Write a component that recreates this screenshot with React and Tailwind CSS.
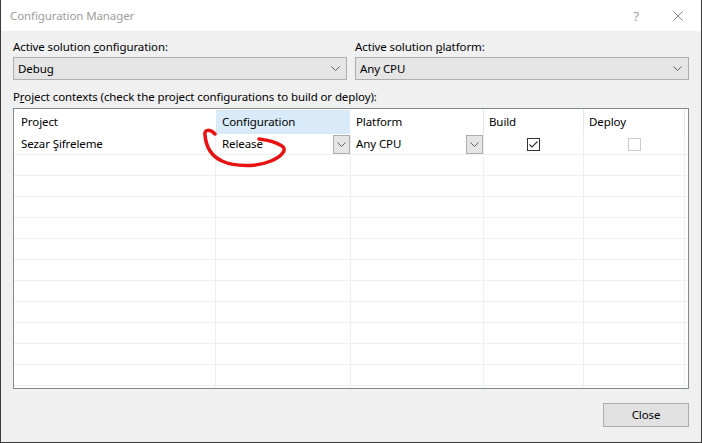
import React from "react";

const Chevron = ({ className = "" }) => (
  <svg width="9" height="5" viewBox="0 0 9 5" className={className}>
    <path d="M0.5 0.5 L4.5 4.5 L8.5 0.5" fill="none" stroke="#606060" strokeWidth="1" />
  </svg>
);

const Select = ({ value }) => (
  <div className="flex h-[23px] w-[334px] items-center justify-between border border-[#adadad] bg-[#e5e5e5] pl-[4px] pr-[6px]">
    <span>{value}</span>
    <Chevron />
  </div>
);

const CellButton = () => (
  <div className="mt-[1px] flex h-[19px] w-[17px] items-center justify-center border border-[#adadad] bg-[#e5e5e5]">
    <Chevron />
  </div>
);

const Sep = () => <div className="w-[1px] bg-[#eceff3]" />;

const EmptyCells = () => (
  <>
    <div className="w-[201px]" />
    <Sep />
    <div className="w-[134px]" />
    <Sep />
    <div className="w-[132px]" />
    <Sep />
    <div className="w-[99px]" />
    <Sep />
    <div className="w-[100px]" />
    <Sep />
    <div className="w-[3px]" />
  </>
);

export default function App() {
  const emptyRows = Array.from({ length: 11 });
  return (
    <div className="relative flex h-[443px] w-[702px] flex-col border-x border-b border-[#3c3c3c] bg-[#f0f0f0] font-['Segoe_UI','Noto_Sans',sans-serif] text-[11.5px] leading-[16px] tracking-[-0.1px] text-black">
      {/* Title bar */}
      <div className="flex h-[31px] shrink-0 items-center justify-between bg-white pl-[9px]">
        <span className="text-[#9d9d9d]">Configuration Manager</span>
        <div className="flex h-full items-center">
          <span className="mr-[34px] text-[13px] text-[#9d9d9d]">?</span>
          <div className="mr-[18px] flex h-[10px] w-[10px] items-center justify-center">
            <svg width="10" height="10" viewBox="0 0 10 10">
              <path d="M0.5 0.5 L9.5 9.5 M9.5 0.5 L0.5 9.5" stroke="#8a8a8a" strokeWidth="1" fill="none" />
            </svg>
          </div>
        </div>
      </div>

      {/* Body */}
      <div className="flex flex-1 flex-col px-[12px] pt-[8px]">
        <div className="flex gap-[8px]">
          <div className="flex flex-col gap-[2px]">
            <span>
              Active solution <span className="underline">c</span>onfiguration:
            </span>
            <Select value="Debug" />
          </div>
          <div className="flex flex-col gap-[2px]">
            <span>
              Active solution <span className="underline">p</span>latform:
            </span>
            <Select value="Any CPU" />
          </div>
        </div>

        <span className="mt-[9px]">
          P<span className="underline">r</span>oject contexts (check the project configurations to build or deploy):
        </span>

        {/* Table */}
        <div className="mt-[3px] flex h-[281px] flex-col border border-[#828790] bg-white">
          {/* Header */}
          <div className="flex h-[25px] shrink-0">
            <div className="flex w-[201px] items-center pl-[7px]">Project</div>
            <div className="w-[1px]" />
            <div className="mt-[1px] flex w-[134px] items-center bg-[#d9ebf9] pl-[6px]">Configuration</div>
            <div className="w-[1px]" />
            <div className="flex w-[132px] items-center pl-[5px]">Platform</div>
            <div className="w-[1px] bg-[#e5e5e5]" />
            <div className="flex w-[99px] items-center pl-[5px]">Build</div>
            <div className="w-[1px] bg-[#e5e5e5]" />
            <div className="flex w-[100px] items-center pl-[5px]">Deploy</div>
            <div className="w-[1px] bg-[#e5e5e5]" />
            <div className="w-[3px]" />
          </div>

          {/* Row 1 */}
          <div className="flex h-[21px] shrink-0 border-b border-[#f0f0f0]">
            <div className="flex w-[201px] items-center pl-[7px]">Sezar Şifreleme</div>
            <Sep />
            <div className="flex w-[134px] items-start justify-between pl-[6px]">
              <span className="leading-[20px]">Release</span>
              <CellButton />
            </div>
            <Sep />
            <div className="flex w-[132px] items-start justify-between pl-[5px]">
              <span className="leading-[20px]">Any CPU</span>
              <CellButton />
            </div>
            <Sep />
            <div className="flex w-[99px] items-center justify-center">
              <div className="flex h-[13px] w-[13px] items-center justify-center border border-[#333333] bg-white">
                <svg width="11" height="11" viewBox="0 0 11 11">
                  <path d="M1.5 5.5 L4 8 L9.5 2.5" fill="none" stroke="#333333" strokeWidth="1.1" />
                </svg>
              </div>
            </div>
            <Sep />
            <div className="flex w-[100px] items-center justify-center">
              <div className="h-[13px] w-[13px] border border-[#cccccc] bg-white" />
            </div>
            <Sep />
            <div className="w-[3px]" />
          </div>

          {emptyRows.map((_, i) => (
            <div key={i} className="flex h-[21px] shrink-0 border-b border-[#f0f0f0]">
              <EmptyCells />
            </div>
          ))}
          <div className="flex flex-1">
            <EmptyCells />
          </div>
        </div>

        <div className="mt-[14px] flex justify-end">
          <div className="flex h-[24px] w-[86px] items-center justify-center border border-[#adadad] bg-[#e1e1e1]">
            Close
          </div>
        </div>
      </div>

      {/* Red hand-drawn annotation */}
      <svg className="pointer-events-none absolute left-0 top-0" width="702" height="443" viewBox="0 0 702 443">
        <path
          d="M214 134 C209 129 203 129 204 135 C205 147 210 156 221 161 C234 167 256 167 270 161 C282 156 286 149 281 146 C275 142 266 140 258 139"
          fill="none"
          stroke="#e81212"
          strokeWidth="3.5"
          strokeLinecap="round"
        />
      </svg>
    </div>
  );
}
